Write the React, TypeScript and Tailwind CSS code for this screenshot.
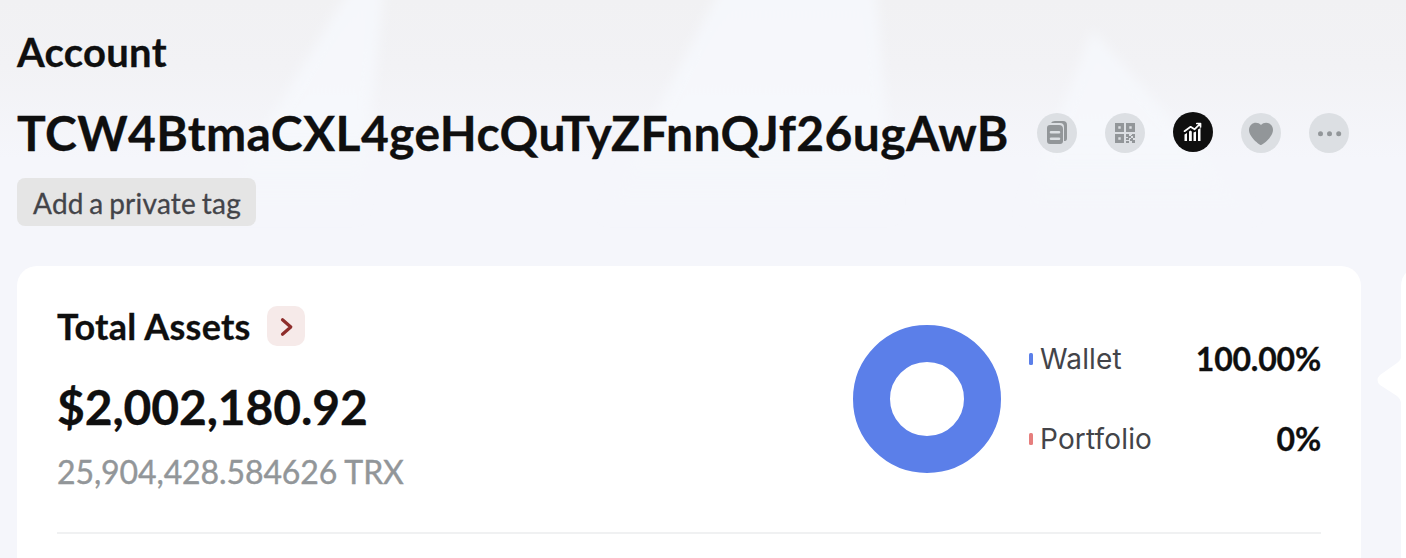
import React from 'react'

interface IconProps {
    className?: string
    children: React.ReactNode
}

interface LegendProps {
    label: string
    value: string
    color: string
}

const RoundButton = ({ className = "bg-[#dcdfe3] text-[#929699]", children }: IconProps) => (
    <button className={`size-10 shrink-0 rounded-full ${className}`}>
        <svg viewBox="0 0 40 40" className="size-10" fill="currentColor">{children}</svg>
    </button>
)

const LegendRow = ({ label, value, color }: LegendProps) => (
    <div className="flex h-10 items-center">
        <span className={`mr-[7px] h-3 w-1 rounded-[1.5px] ${color}`}></span>
        <span className="font-['Inter',sans-serif] text-[28px] tracking-[0.15px] text-[#434449]">{label}</span>
        <span className="ml-auto text-[32px] font-bold tracking-[-0.2px] text-[#0f0f0f] [-webkit-text-stroke:0.3px]">{value}</span>
    </div>
)

const Backdrop = () => (
    <svg viewBox="0 0 1406 266" className="absolute left-0 top-0 h-[266px] w-full" aria-hidden="true">
        <defs>
            <linearGradient id="fade" x1="0" y1="0" x2="0" y2="1">
                <stop offset="0" stopColor="#f1f1f3" />
                <stop offset="0.25" stopColor="#f2f2f5" />
                <stop offset="0.6" stopColor="#f5f6fb" />
            </linearGradient>
            <linearGradient id="beam" x1="0" y1="0" x2="0" y2="1">
                <stop offset="0" stopColor="#f5f7fb" />
                <stop offset="0.6" stopColor="#f6f8fc" />
                <stop offset="1" stopColor="#f5f7fb" stopOpacity="0" />
            </linearGradient>
            <filter id="soft" x="-20%" y="-20%" width="140%" height="140%">
                <feGaussianBlur stdDeviation="6" />
            </filter>
        </defs>
        <rect width="1406" height="266" fill="url(#fade)" />
        <g fill="url(#beam)" filter="url(#soft)">
            <path d="M355 -20H385L360 220H210Z" />
            <path d="M725 -20H875L895 220H600Z" />
            <path d="M1092 30L1260 220H1020Z" />
        </g>
    </svg>
)

const AssetsCard = () => (
    <div className="h-[312px] w-[1344px] shrink-0 rounded-t-[20px] bg-white px-10 pt-10">
        <div className="flex h-[226px] justify-between">
            <div>
                <div className="flex h-10 items-center">
                    <h2 className="w-[210px] whitespace-nowrap text-4xl font-bold leading-10 tracking-[0.25px] [-webkit-text-stroke:0.3px]">Total Assets</h2>
                    <button className="flex h-10 w-[38px] items-center justify-center rounded-[10px] bg-[#f6eae9]">
                        <svg viewBox="0 0 38 40" className="h-10 w-[38px]" fill="none" stroke="#8e2d2b" strokeWidth="3.2">
                            <path d="M15.5 13.8L23.8 21L15.5 28.2" strokeLinecap="round" strokeLinejoin="round" />
                        </svg>
                    </button>
                </div>
                <div className="mt-8 text-5xl font-bold leading-[58px] tracking-[-0.12px] [-webkit-text-stroke:0.3px]">$2,002,180.92</div>
                <div className="mt-4 text-[32px] leading-10 tracking-[-0.1px] text-[#929699] [-webkit-text-stroke:0.4px]">25,904,428.584626 TRX</div>
            </div>
            <div className="flex gap-7">
                <svg viewBox="0 0 148 148" className="mt-[19px] size-[148px]">
                    <circle cx="74" cy="74" r="55.5" fill="none" stroke="#5b7fe9" strokeWidth="37" />
                </svg>
                <div className="mt-[33px] flex w-[292px] flex-col gap-10">
                    <LegendRow label="Wallet" value="100.00%" color="bg-[#5b7fe9]" />
                    <LegendRow label="Portfolio" value="0%" color="bg-[#e67e7d]" />
                </div>
            </div>
        </div>
        <div className="h-0.5 bg-[#f0f1f2]"></div>
    </div>
)

const App = () => {
    return (
        <div className="relative h-[558px] w-full overflow-hidden bg-[#f5f6fb] font-['Lato',sans-serif] text-[#0f0f0f]">
            <Backdrop />
            <div className="relative pl-[17px]">
                <header className="h-[266px] pt-[27px]">
                    <h1 className="text-[40px] font-bold leading-[50px] tracking-[0.3px] [-webkit-text-stroke:0.3px]">Account</h1>
                    <div className="mt-[26px] flex h-[60px] items-center">
                        <span className="w-[1020px] text-5xl font-bold tracking-[0.4px] [-webkit-text-stroke:0.3px]">TCW4BtmaCXL4geHcQuTyZFnnQJf26ugAwB</span>
                        <div className="flex gap-7">
                            <RoundButton>
                                <path d="M14 10Q15 8 18 8H26Q30 8 30 12V25Q30 28 28 28H27V14Q27 10 23 10Z" />
                                <path fillRule="evenodd" d="M13 12H22Q26 12 26 16V28Q26 31 23 31H13Q10 31 10 28V15Q10 12 13 12ZM14 18Q12.7 18 12.7 19.3T14 20.6H22Q23.3 20.6 23.3 19.3T22 18ZM14 24.5Q12.7 24.5 12.7 25.8T14 27.1H22Q23.3 27.1 23.3 25.8T22 24.5Z" />
                            </RoundButton>
                            <RoundButton>
                                <path fillRule="evenodd" d="M10 10H19V19H10ZM13.3 13.3V15.7H15.7V13.3ZM21 10H30V19H21ZM24.3 13.3V15.7H26.7V13.3ZM10 21H19V30H10ZM13.3 24.3V26.7H15.7V24.3Z" />
                                <path d="M21 21H24V23H26V25H24V27H21V25H23V24H21ZM27 21H30V25H28V23H26V22H27ZM26 25H28V27H30V30H27V28H25V26H26ZM21 28H24V30H21Z" />
                            </RoundButton>
                            <RoundButton className="-mt-px bg-[#0f0f0f] text-white">
                                <path d="M11.5 22.5L14 21V29H11.5ZM16 19.5L17.3 18.5L18.8 19.5V29H16ZM20.5 20.5L23 19.5V29H20.5ZM25 17.5L27.5 16V29H25Z" />
                                <path d="M11.5 19.2L17.6 14.8L21.5 17.3L27 11.8M23.8 11.5H27.5V15" fill="none" stroke="currentColor" strokeWidth="1.7" strokeLinecap="round" strokeLinejoin="round" />
                            </RoundButton>
                            <RoundButton>
                                <path d="M20 32C18.5 32 8 24 8 17C8 10 16 7.5 20 12C24 7.5 32 10 32 17C32 24 21.5 32 20 32Z" />
                            </RoundButton>
                            <RoundButton>
                                <circle cx="11.5" cy="20.7" r="2.5" />
                                <circle cx="20.5" cy="20.7" r="2.5" />
                                <circle cx="29.7" cy="20.7" r="2.5" />
                            </RoundButton>
                        </div>
                    </div>
                    <button className="mt-[15px] flex h-12 w-[239px] items-center justify-center whitespace-nowrap rounded-lg bg-[#e5e5e5] pl-px pt-px text-[28px] tracking-[0.25px] text-[#434449] [-webkit-text-stroke:0.3px] [word-spacing:-1.8px]">Add a private tag</button>
                </header>
                <div className="flex gap-10">
                    <AssetsCard />
                    <aside className="relative h-[312px] w-10 shrink-0 rounded-tl-[20px] bg-white">
                        {/* pointer towards the assets card */}
                        <svg viewBox="0 0 24 48" className="absolute -left-6 top-[90px] h-12 w-6">
                            <path d="M24 1Q24 4 20 7L3 19Q-2 24 3 29L20 40Q24 43 24 48Z" fill="white" />
                        </svg>
                    </aside>
                </div>
            </div>
        </div>
    )
}

export default App
